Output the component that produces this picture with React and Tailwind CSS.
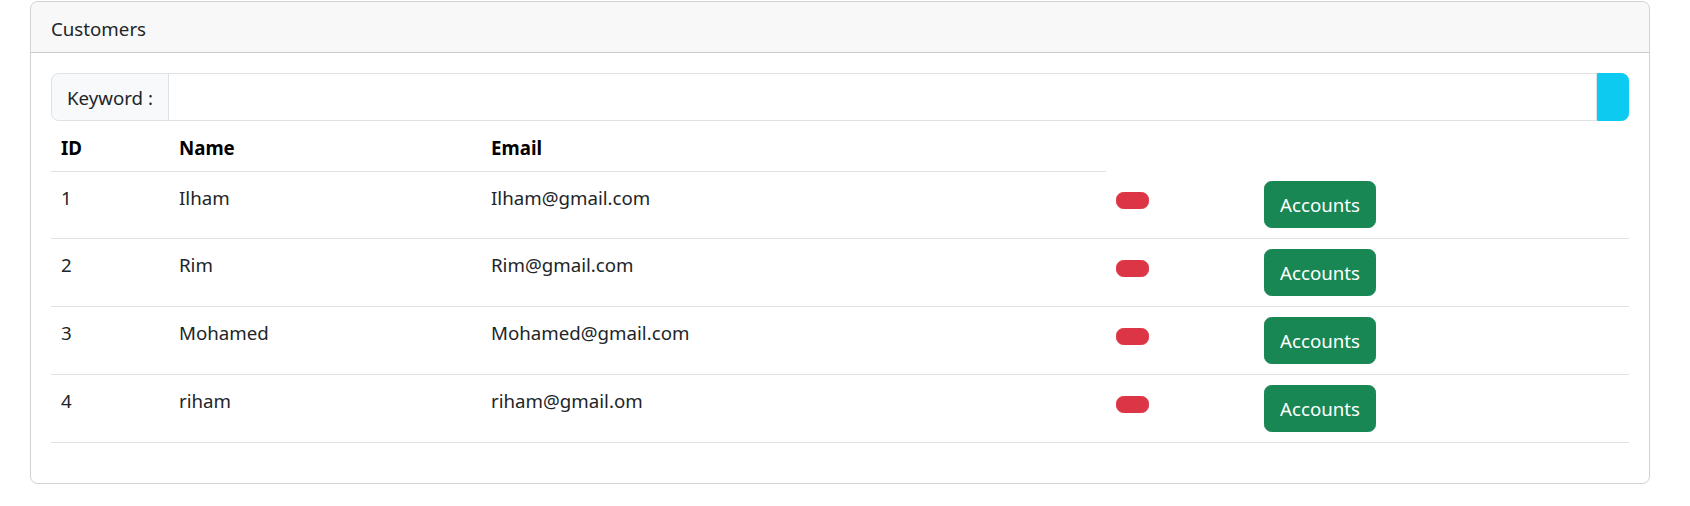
export default function App() {
  const rows = [
    { id: 1, name: "Ilham", email: "Ilham@gmail.com" },
    { id: 2, name: "Rim", email: "Rim@gmail.com" },
    { id: 3, name: "Mohamed", email: "Mohamed@gmail.com" },
    { id: 4, name: "riham", email: "riham@gmail.om" },
  ];
  const cell = "px-[10px] border-b border-[#dee2e6] align-top text-left";
  const txt = cell + " pt-[11px] pb-[9px]";
  const btnCell = cell + " py-[10px]";
  return (
    <div className="bg-white w-[1690px] h-[506px] font-['Noto_Sans',sans-serif] text-[18.7px] leading-[30px] text-[#212529] pt-px">
      <div className="ml-[30px] w-[1620px] border border-[rgba(0,0,0,0.175)] rounded-[7.5px] overflow-hidden">
        <div className="px-[20px] pt-[12px] pb-[8px] bg-[rgba(33,37,41,0.03)] border-b border-[rgba(0,0,0,0.175)]">
          Customers
        </div>
        <div className="p-[20px]">
          <div className="flex h-[47.5px]">
            <span className="flex items-center pt-[2px] px-[15px] bg-[#f8f9fa] border border-[#dee2e6] rounded-l-[7.5px]">
              Keyword :
            </span>
            <input className="flex-1 -ml-px border border-[#dee2e6] outline-none px-[15px]" />
            <button className="w-[32.5px] bg-[#0dcaf0] border border-[#0dcaf0] rounded-r-[7.5px]"></button>
          </div>
          <table className="w-full table-fixed border-collapse mb-[20px]">
            <colgroup>
              <col className="w-[118px]" />
              <col className="w-[312px]" />
              <col className="w-[625px]" />
              <col className="w-[148px]" />
              <col />
            </colgroup>
            <thead>
              <tr>
                <th className={cell + " pt-[12px] pb-[8px] font-bold text-black"}>ID</th>
                <th className={cell + " pt-[12px] pb-[8px] font-bold text-black"}>Name</th>
                <th className={cell + " pt-[12px] pb-[8px] font-bold text-black"}>Email</th>
              </tr>
            </thead>
            <tbody>
              {rows.map((r) => (
                <tr key={r.id}>
                  <td className={txt}>{r.id}</td>
                  <td className={txt}>{r.name}</td>
                  <td className={txt}>{r.email}</td>
                  <td className={btnCell}>
                    <button className="block mt-[10.5px] w-[32.5px] h-[17px] bg-[#dc3545] border border-[#dc3545] rounded-[7.5px]"></button>
                  </td>
                  <td className={btnCell}>
                    <button className="inline-block bg-[#198754] border border-[#198754] text-white px-[15px] py-[7.5px] leading-[30px] rounded-[7.5px]">
                      Accounts
                    </button>
                  </td>
                </tr>
              ))}
            </tbody>
          </table>
        </div>
      </div>
    </div>
  );
}
